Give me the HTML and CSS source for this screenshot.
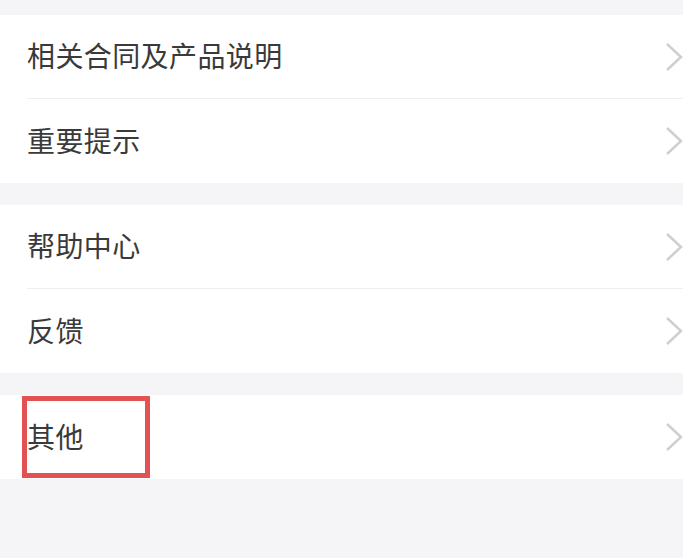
FILE: index.html
```html
<!DOCTYPE html>
<html>

<head>
    <meta charset="utf-8" />
    <title>设置</title>
    <meta name="viewport" content="width=device-width, initial-scale=1">
    <link rel="stylesheet" href="styles.css">
</head>

<body>
    <div class="page">
        <div class="group">
            <div class="row">
                <span class="label">相关合同及产品说明</span>
                <svg class="arrow" viewBox="0 0 18 28"><polyline points="2,1 16,14 2,27" /></svg>
            </div>
            <div class="row">
                <span class="label">重要提示</span>
                <svg class="arrow" viewBox="0 0 18 28"><polyline points="2,1 16,14 2,27" /></svg>
            </div>
        </div>
        <div class="group">
            <div class="row">
                <span class="label">帮助中心</span>
                <svg class="arrow" viewBox="0 0 18 28"><polyline points="2,1 16,14 2,27" /></svg>
            </div>
            <div class="row">
                <span class="label">反馈</span>
                <svg class="arrow" viewBox="0 0 18 28"><polyline points="2,1 16,14 2,27" /></svg>
            </div>
        </div>
        <div class="group">
            <div class="row marked">
                <span class="label">其他</span>
                <svg class="arrow" viewBox="0 0 18 28"><polyline points="2,1 16,14 2,27" /></svg>
                <div class="highlight"></div>
            </div>
        </div>
    </div>
</body>

</html>
```

FILE: styles.css
```css
body {
    margin: 0;
    background-color: #f5f5f8;
    font-family: "Noto Sans CJK SC", "Noto Sans", sans-serif;
}

.page {
    padding-top: 15px;
    display: flex;
    flex-direction: column;
    gap: 22px;
}

.group {
    background-color: #fff;
    padding-left: 27px;
}

.row {
    height: 83px;
    display: flex;
    align-items: center;
    justify-content: space-between;
    border-bottom: 1px solid #efefef;
}

.row:last-child {
    border-bottom: 0;
    height: 84px;
}

.label {
    font-size: 28px;
    color: #3a3a3a;
    letter-spacing: 0.4px;
    margin-top: -3px;
}

.arrow {
    width: 18px;
    height: 28px;
    fill: none;
    stroke: #cfcfcf;
    stroke-width: 2.5;
}

.marked {
    position: relative;
}

.highlight {
    position: absolute;
    left: -5px;
    top: 1px;
    width: 118px;
    height: 72px;
    border: 5px solid #e25252;
}
```
